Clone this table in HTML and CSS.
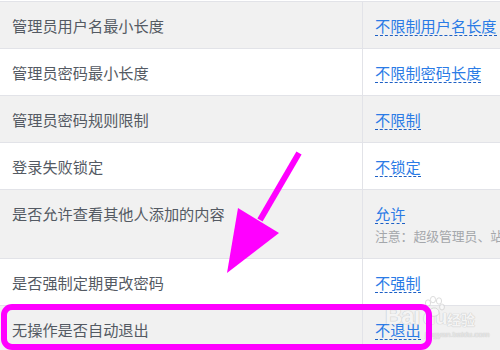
FILE: index.html
```html
<!DOCTYPE html>
<html lang="zh">
<head>
<meta charset="utf-8">
<link rel="stylesheet" href="styles.css">
</head>
<body>
<div class="page">
  <table class="settings">
    <tbody>
      <tr class="alt">
        <td class="label">管理员用户名最小长度</td>
        <td class="value"><span class="link">不限制用户名长度</span></td>
      </tr>
      <tr>
        <td class="label">管理员密码最小长度</td>
        <td class="value"><span class="link">不限制密码长度</span></td>
      </tr>
      <tr class="alt">
        <td class="label">管理员密码规则限制</td>
        <td class="value"><span class="link">不限制</span></td>
      </tr>
      <tr>
        <td class="label">登录失败锁定</td>
        <td class="value"><span class="link">不锁定</span></td>
      </tr>
      <tr class="alt">
        <td class="label">是否允许查看其他人添加的内容</td>
        <td class="value"><span class="link">允许</span><div class="note">注意：超级管理员、站点管理员不受此限制</div></td>
      </tr>
      <tr>
        <td class="label">是否强制定期更改密码</td>
        <td class="value"><span class="link">不强制</span></td>
      </tr>
      <tr class="alt">
        <td class="label">无操作是否自动退出</td>
        <td class="value"><span class="link">不退出</span></td>
      </tr>
    </tbody>
  </table>

  <div class="watermark">
    <span class="wm-bai">Bai</span><span class="wm-du">du</span><span class="wm-jy">经验</span>
    <span class="wm-url">jingyan.baidu.com</span>
    <svg class="wm-paw" width="22" height="22" viewBox="0 0 22 22">
      <g fill="#fff" stroke="#c8c8c8" stroke-width="1" opacity="0.85">
        <ellipse cx="5" cy="7" rx="2.6" ry="3.2"/>
        <ellipse cx="10" cy="3.6" rx="2.6" ry="3.2"/>
        <ellipse cx="16" cy="5" rx="2.6" ry="3.2"/>
        <ellipse cx="19" cy="11" rx="2.4" ry="3"/>
        <path d="M6 17 C6 11 15 10 16 16 C17 21 6 22 6 17 Z"/>
      </g>
    </svg>
  </div>

  <svg class="annot" width="500" height="350" viewBox="0 0 500 350">
    <line x1="299" y1="153" x2="260" y2="220" stroke="#ff00ff" stroke-width="6"/>
    <polygon points="238,208 279,233 227,273" fill="#ff00ff"/>
    <rect x="4" y="307" width="425" height="40" rx="8" ry="8" fill="none" stroke="#ff00ff" stroke-width="6"/>
  </svg>
</div>
</body>
</html>
```

FILE: styles.css
```css
html, body {
  margin: 0;
  padding: 0;
  background: #ffffff;
}
body {
  width: 500px;
  height: 350px;
  overflow: hidden;
  font-family: "Noto Sans CJK SC", "Noto Sans", sans-serif;
}
.page {
  position: relative;
  width: 500px;
  height: 350px;
  overflow: hidden;
}
.settings {
  border-collapse: collapse;
  width: 640px;
  margin-top: 1px;
  border-top: 1px solid #e2e3e8;
}
.settings tr {
  background: #ffffff;
}
.settings tr.alt {
  background: #f1f1f1;
}
.settings td {
  vertical-align: top;
  padding: 13px 12px 12px 12px;
  border-bottom: 1px solid #e2e3e8;
  font-size: 15.2px;
  line-height: 21px;
}
.label {
  width: 338px;
  color: #545a63;
  border-right: 1px solid #e2e3e8;
}
.value {
  color: #2a7be6;
}
.link {
  display: inline-block;
  vertical-align: top;
  color: #2a7be6;
  border-bottom: 1px dashed #1d5fc4;
  line-height: 20px;
}
.note {
  margin-top: 2px;
  font-size: 12.8px;
  line-height: 20px;
  color: #a4a7ab;
  white-space: nowrap;
}
.annot {
  position: absolute;
  left: 0;
  top: 0;
  pointer-events: none;
}
.watermark {
  position: absolute;
  left: 383px;
  top: 296px;
  width: 110px;
  height: 50px;
  opacity: 0.7;
  font-family: "Liberation Sans", Arial, sans-serif;
  color: #f6f6f6;
  text-shadow: 0 0 1px #b5b5b5, 0 0 1px #b5b5b5;
}
.wm-bai {
  position: absolute;
  left: 2px;
  top: 6px;
  font-size: 24px;
  font-weight: bold;
  letter-spacing: -1px;
}
.wm-du {
  position: absolute;
  left: 40px;
  top: 10px;
  font-size: 20px;
  font-weight: bold;
}
.wm-jy {
  position: absolute;
  left: 64px;
  top: 13px;
  font-size: 14px;
  font-family: "Noto Sans CJK SC", sans-serif;
  font-weight: bold;
}
.wm-url {
  position: absolute;
  left: 42px;
  top: 34px;
  font-size: 8px;
  color: #e8e8e8;
}
.wm-paw {
  position: absolute;
  left: 40px;
  top: 0;
}
```
